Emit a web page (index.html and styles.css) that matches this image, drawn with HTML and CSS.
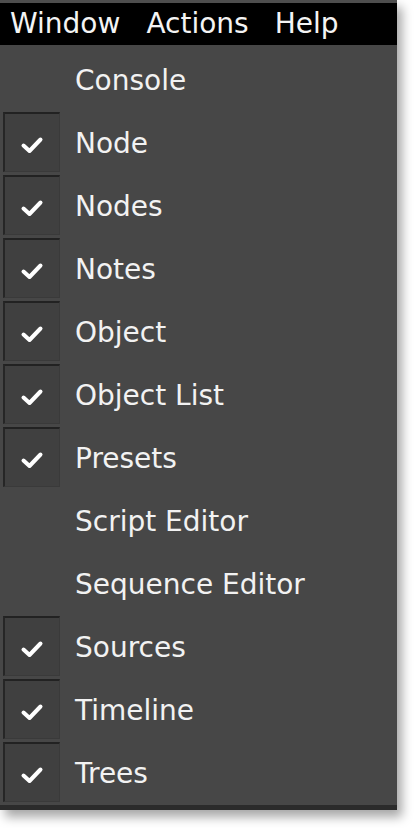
FILE: index.html
```html
<!DOCTYPE html>
<html>
<head>
<meta charset="utf-8">
<link rel="stylesheet" href="styles.css">
</head>
<body>
<div class="menu">
  <div class="menubar">
    <span class="mb-item">Window</span>
    <span class="mb-item">Actions</span>
    <span class="mb-item">Help</span>
  </div>
  <ul class="list">
    <li class="row"><span class="box empty"></span><span class="label">Console</span></li>
    <li class="row"><span class="box"><svg viewBox="0 0 24 18" width="24" height="18"><path d="M3.5 9.5 L9.5 15 L20.5 3.5" /></svg></span><span class="label">Node</span></li>
    <li class="row"><span class="box"><svg viewBox="0 0 24 18" width="24" height="18"><path d="M3.5 9.5 L9.5 15 L20.5 3.5" /></svg></span><span class="label">Nodes</span></li>
    <li class="row"><span class="box"><svg viewBox="0 0 24 18" width="24" height="18"><path d="M3.5 9.5 L9.5 15 L20.5 3.5" /></svg></span><span class="label">Notes</span></li>
    <li class="row"><span class="box"><svg viewBox="0 0 24 18" width="24" height="18"><path d="M3.5 9.5 L9.5 15 L20.5 3.5" /></svg></span><span class="label">Object</span></li>
    <li class="row"><span class="box"><svg viewBox="0 0 24 18" width="24" height="18"><path d="M3.5 9.5 L9.5 15 L20.5 3.5" /></svg></span><span class="label">Object List</span></li>
    <li class="row"><span class="box"><svg viewBox="0 0 24 18" width="24" height="18"><path d="M3.5 9.5 L9.5 15 L20.5 3.5" /></svg></span><span class="label">Presets</span></li>
    <li class="row"><span class="box empty"></span><span class="label">Script Editor</span></li>
    <li class="row"><span class="box empty"></span><span class="label">Sequence Editor</span></li>
    <li class="row"><span class="box"><svg viewBox="0 0 24 18" width="24" height="18"><path d="M3.5 9.5 L9.5 15 L20.5 3.5" /></svg></span><span class="label">Sources</span></li>
    <li class="row"><span class="box"><svg viewBox="0 0 24 18" width="24" height="18"><path d="M3.5 9.5 L9.5 15 L20.5 3.5" /></svg></span><span class="label">Timeline</span></li>
    <li class="row"><span class="box"><svg viewBox="0 0 24 18" width="24" height="18"><path d="M3.5 9.5 L9.5 15 L20.5 3.5" /></svg></span><span class="label">Trees</span></li>
  </ul>
</div>
</body>
</html>
```
FILE: styles.css
```css
html, body {
  margin: 0;
  padding: 0;
  background: #ffffff;
}
body {
  font-family: "DejaVu Sans", Verdana, sans-serif;
  width: 418px;
  height: 828px;
  overflow: hidden;
}
.menu {
  width: 397px;
  background: #474747;
  border-bottom: 5px solid #2b2b2b;
  box-shadow: 5px 7px 10px rgba(0, 0, 0, 0.35);
}
.menubar {
  height: 42px;
  border-top: 3px solid #4e4e4e;
  background: #000000;
  display: flex;
  align-items: center;
  padding-left: 10px;
  gap: 26px;
}
.mb-item {
  color: #f4f4f4;
  font-size: 28px;
  line-height: 42px;
}
.list {
  list-style: none;
  margin: 0;
  padding: 4px 0 0 0;
}
.row {
  height: 63px;
  display: flex;
  align-items: center;
}
.box {
  width: 57px;
  height: 60px;
  margin-left: 3px;
  margin-right: 15px;
  padding-top: 4px;
  box-sizing: border-box;
  background: #404040;
  border-top: 2px solid #222222;
  border-left: 2px solid #262626;
  border-right: 1px solid #3a3a3a;
  border-bottom: 1px solid #3a3a3a;
  display: flex;
  align-items: center;
  justify-content: center;
  align-self: flex-start;
}
.box.empty {
  visibility: hidden;
}
.box svg path {
  fill: none;
  stroke: #ffffff;
  stroke-width: 4;
  stroke-linecap: round;
  stroke-linejoin: round;
}
.label {
  color: #f2f2f2;
  font-size: 28px;
}
```
